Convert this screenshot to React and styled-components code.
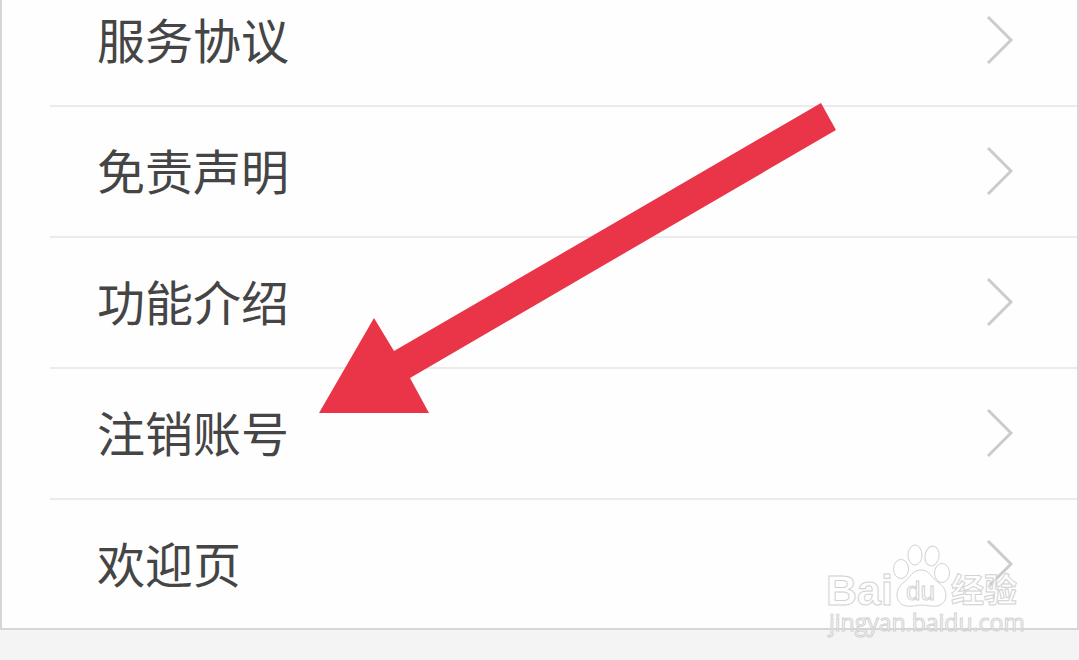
import React from 'react';
import styled, { createGlobalStyle } from 'styled-components';

const GlobalStyle = createGlobalStyle`
  * { box-sizing: border-box; }
  body {
    margin: 0;
    background: #f4f4f4;
    font-family: "Noto Sans CJK SC", sans-serif;
  }
`;

const Page = styled.main`
  position: relative;
  min-height: 100vh;
  overflow: hidden;
`;

const Panel = styled.nav`
  background: #fefefe;
  border: 2px solid #d6d6d6;
  border-top: 0;
  overflow: hidden;
`;

const List = styled.ul`
  list-style: none;
  margin: -24px 0 0 48px;
  padding: 0;
`;

const Item = styled.li`
  border-bottom: 2px solid #ebebeb;

  &:last-child {
    border-bottom: 0;
    margin-bottom: -1px;
  }
`;

const RowLink = styled.a`
  display: flex;
  align-items: center;
  justify-content: space-between;
  height: 129px;
  padding: 0 64px 2px 47px;
  color: #454545;
  text-decoration: none;
`;

const Label = styled.span`
  padding-bottom: 4px;
  font-size: 48px;
  font-weight: 400;
  line-height: 72px;
`;

const Chevron = styled.svg`
  flex: none;
  width: 28px;
  height: 50px;
  fill: none;
  stroke: #cbcbcb;
  stroke-width: 3;
`;

const Arrow = styled.svg`
  position: absolute;
  left: 318px;
  top: 103px;
  width: 518px;
  height: 311px;
  fill: #ea3549;
  pointer-events: none;
`;

const Watermark = styled.svg`
  position: absolute;
  right: 55px;
  top: 540px;
  width: 200px;
  height: 102px;
  pointer-events: none;
  fill: #ffffff;
  fill-opacity: 0.5;
  stroke: #d2d2d2;
  stroke-width: 1;
`;

const fonts = {
  latin: '"Liberation Sans", sans-serif',
  cjk: '"Noto Sans CJK SC", sans-serif',
  url: '"Open Sans", sans-serif',
};

const Brand = styled.text`
  font-size: ${({ $size }) => $size}px;
  font-weight: ${({ $weight }) => $weight || 700};
  font-family: ${({ $font }) => fonts[$font || 'latin']};
`;

const items = ['服务协议', '免责声明', '功能介绍', '注销账号', '欢迎页'];

export default function App() {
  return (
    <Page>
      <GlobalStyle />
      <Panel>
        <List>
          {items.map((label) => (
            <Item key={label}>
              <RowLink href="#">
                <Label>{label}</Label>
                <Chevron viewBox="0 0 28 50" aria-hidden="true">
                  <path d="M3 2 L26 25 L3 48" />
                </Chevron>
              </RowLink>
            </Item>
          ))}
        </List>
      </Panel>
      <Arrow viewBox="0 0 518 311" aria-hidden="true">
        <path d="M503 0 L518 27 L92 275 L111 310 L1 310 L56 215 L76 248 Z" />
      </Arrow>
      <Watermark viewBox="0 0 200 102">
        <Brand x="2" y="65" $size={43}>Bai</Brand>
        <ellipse cx="77" cy="29" rx="7.5" ry="9.5" />
        <ellipse cx="91" cy="15" rx="7" ry="10" />
        <ellipse cx="108" cy="16" rx="7" ry="10" transform="rotate(10 108 16)" />
        <ellipse cx="118" cy="33" rx="7.5" ry="9.5" />
        <path d="M97 30 C88 30 86 38 79 43 C70 50 71 65 83 66 C89 67 92 65 97 65 C103 65 108 67 113 66 C124 64 125 50 115 43 C107 38 106 30 97 30 Z" />
        <Brand x="82" y="60" $size={26} $weight={400}>du</Brand>
        <Brand x="127" y="62" $size={33} $font="cjk">经验</Brand>
        <Brand x="5" y="91" $size={23} $weight={400} $font="url">jingyan.baidu.com</Brand>
      </Watermark>
    </Page>
  );
}
